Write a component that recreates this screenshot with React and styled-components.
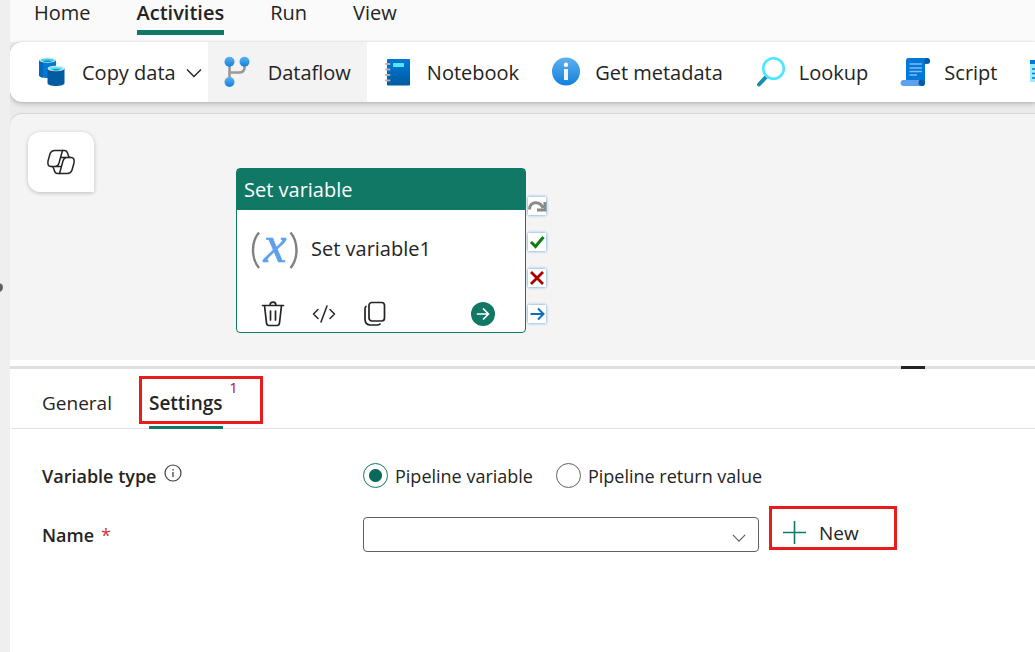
import React, { useState } from "react";
import styled, { createGlobalStyle, css } from "styled-components";

const GREEN = "#117865";

const GlobalStyle = createGlobalStyle`
  * { box-sizing: border-box; }
  body {
    margin: 0;
    background: #fff;
    color: #242424;
    font-family: "Open Sans", "Noto Sans", sans-serif;
    font-size: 20px;
    line-height: 28px;
    overflow: hidden;
  }
  button, select, input { font: inherit; color: inherit; margin: 0; }
  svg { display: block; flex: none; overflow: visible; }
`;

const Shell = styled.div`
  display: flex;
  min-height: 100vh;
`;

const Rail = styled.aside`
  position: relative;
  flex: none;
  width: 10px;
  background: #efefef;
`;

const RailDot = styled.span`
  position: absolute;
  top: 283px;
  left: -6px;
  width: 9px;
  height: 9px;
  border-radius: 50%;
  background: #616161;
`;

const Main = styled.main`
  flex: 1;
  min-width: 0;
  display: flex;
  flex-direction: column;
`;

const Plain = css`
  border: 0;
  padding: 0;
  background: none;
  cursor: pointer;
`;

const MenuTabs = styled.nav`
  display: flex;
  align-items: flex-start;
  gap: 46px;
  height: 42px;
  padding-left: 24px;
  background: #fafafa;
`;

const MenuTab = styled.button`
  ${Plain}
  height: 35px;
  padding-bottom: 4px;
  border-bottom: 5px solid ${(p) => (p.$active ? GREEN : "transparent")};
  font-weight: ${(p) => (p.$active ? 600 : 400)};
  line-height: 26px;
`;

const Ribbon = styled.div`
  background: #ebebeb;
  padding-bottom: 12px;
`;

const Toolbar = styled.div`
  display: flex;
  height: 60px;
  padding-left: 12px;
  border-radius: 12px 0 0 12px;
  background: #fff;
  box-shadow: 0 2px 5px rgba(0, 0, 0, 0.2), 0 0 2px rgba(0, 0, 0, 0.16);
  overflow: hidden;
`;

const ToolButton = styled.button`
  ${Plain}
  display: flex;
  flex: none;
  align-items: center;
  gap: 16px;
  padding: 0 16px;
  background: ${(p) => (p.$active ? "#f3f3f3" : "transparent")};
  white-space: nowrap;
`;

const CopyTool = styled(ToolButton)`
  padding-right: 6px;
`;

const ToolLabel = styled.span`
  display: flex;
  align-items: center;
  gap: 10px;
  padding-top: 2px;
`;

const Canvas = styled.section`
  position: relative;
  flex: none;
  height: 246px;
  border-radius: 12px 0 0 0;
  background: #f4f4f4;
  box-shadow: 0 -1px 1px rgba(0, 0, 0, 0.1);
`;

const CanvasBack = styled.div`
  background: #ebebeb;
`;

const CopilotButton = styled.button`
  ${Plain}
  position: absolute;
  top: 18px;
  left: 18px;
  display: grid;
  place-items: center;
  width: 66px;
  height: 60px;
  border-radius: 12px 12px 0 12px;
  background: #fff;
  box-shadow: 0 1px 4px rgba(0, 0, 0, 0.22);
`;

const Node = styled.article`
  position: absolute;
  top: 54px;
  left: 226px;
  display: flex;
  flex-direction: column;
  width: 290px;
  height: 165px;
  border: 1px solid ${GREEN};
  border-radius: 4px;
  background: #fff;
`;

const NodeTitle = styled.header`
  height: 41px;
  padding: 7px;
  background: ${GREEN};
  color: #fff;
`;

const NodeBody = styled.div`
  display: flex;
  align-items: center;
  gap: 12px;
  height: 78px;
  padding-left: 14px;
`;

const NodeActions = styled.div`
  display: flex;
  align-items: center;
  gap: 27px;
  height: 44px;
  padding: 8px 30px 0 24px;
`;

const IconButton = styled.button`
  ${Plain}
  margin-left: ${(p) => (p.$last ? "auto" : "0")};
`;

const Handles = styled.div`
  position: absolute;
  top: 83px;
  left: 518px;
  display: flex;
  flex-direction: column;
  gap: 18px;
`;

const Handle = styled.span`
  display: grid;
  place-items: center;
  width: 18px;
  height: 18px;
  background: #fff;
  box-shadow: 0 0 3px #4a9be0;
`;

const Splitter = styled.div`
  display: flex;
  justify-content: flex-end;
  margin-top: 6px;
  height: 3px;
  padding-right: 110px;
  background: #e0e0e0;
`;

const Grip = styled.span`
  width: 24px;
  background: #242424;
`;

const PanelTabs = styled.nav`
  display: flex;
  align-items: flex-end;
  gap: 37px;
  height: 60px;
  margin-left: 2px;
  padding-left: 30px;
  border-bottom: 1px solid #e0e0e0;
  font-size: 19px;
`;

const PanelTab = styled.button`
  ${Plain}
  position: relative;
  margin-bottom: -1px;
  padding-bottom: 9px;
  border-bottom: 3px solid ${(p) => (p.$active ? GREEN : "transparent")};
  font-weight: ${(p) => (p.$active ? 600 : 400)};
`;

const Callout = styled.span`
  position: absolute;
  top: -13px;
  left: -10px;
  width: 124px;
  height: 48px;
  padding-right: 22px;
  border: 3px solid #e91c1c;
  color: #c8006e;
  font-size: 15px;
  font-weight: 400;
  line-height: 16px;
  text-align: right;
  pointer-events: none;
`;

const Form = styled.form`
  display: grid;
  grid-template-columns: 321px 1fr;
  row-gap: 16px;
  padding: 25px 32px;
  font-size: 18px;
`;

const FieldLabel = styled.label`
  display: flex;
  align-items: center;
  gap: 7px;
  height: 43px;
  font-weight: 600;
`;

const Required = styled.span`
  color: #d13438;
  font-weight: 400;
`;

const Field = styled.div`
  display: flex;
  align-items: center;
  gap: 10px;
`;

const RadioLabel = styled.label`
  display: flex;
  align-items: center;
  gap: 7px;
  margin-right: 13px;
  white-space: nowrap;
`;

const Radio = styled.input`
  appearance: none;
  width: 25px;
  height: 25px;
  border: 1px solid #616161;
  border-radius: 50%;
  background: #fff;
  &:checked {
    border-color: ${GREEN};
    background: radial-gradient(circle, #0c695a 6px, #fff 7px);
  }
`;

const SelectWrap = styled.div`
  position: relative;
  flex: 0 1 396px;
`;

const Select = styled.select`
  display: block;
  appearance: none;
  width: 100%;
  height: 35px;
  border: 1px solid #616161;
  border-radius: 4px;
  background: #fff;
`;

const SelectArrow = styled.span`
  position: absolute;
  top: 16px;
  right: 13px;
  pointer-events: none;
`;

const NewButton = styled.button`
  ${Plain}
  display: flex;
  flex: none;
  align-items: center;
  gap: 13px;
  width: 128px;
  height: 44px;
  margin-top: -14px;
  padding: 10px 0 0 11px;
  border: 3px solid #e91c1c;
  font-size: 19px;
`;

const Chevron = ({ width = 16, color = "#242424" }) => (
  <svg width={width} height="10" viewBox="0 0 16 10" fill="none" stroke={color} strokeWidth="1.4">
    <path d="M1 1.5 8 8.5l7-7" />
  </svg>
);

const Icon = ({ children }) => (
  <svg width="28" height="32" viewBox="0 0 28 32" fill="none">
    <defs>
      <linearGradient id="sky" x1="0" y1="0" x2="0" y2="1">
        <stop offset="0" stopColor="#5eb0ef" />
        <stop offset="1" stopColor="#1380dc" />
      </linearGradient>
      <linearGradient id="azure" x1="0" y1="0" x2="0" y2="1">
        <stop offset="0" stopColor="#0078d7" />
        <stop offset="1" stopColor="#005ba1" />
      </linearGradient>
    </defs>
    {children}
  </svg>
);

const CopyIcon = () => (
  <Icon>
    <path d="M1 4v15c0 2 4 3 8.500 3s8.500-1 8.500-3V4z" fill="#0078d4" />
    <path d="M1 4v15c0 1.300 1.700 2.300 4 2.700V5z" fill="#0068bd" />
    <ellipse cx="9.500" cy="4" rx="8.500" ry="2.700" fill="#e8e8e8" />
    <ellipse cx="9.500" cy="4.200" rx="6.800" ry="1.800" fill="#32d4f5" />
    <path d="M5 5.300c2-1 7-1 9 0-2 .9-7 .9-9 0z" fill="#198ab3" />
    <path d="M9.500 12.500V27c0 2 4 3 8.500 3s8.500-1 8.500-3V12.500z" fill="#005ba1" />
    <ellipse cx="18" cy="12.500" rx="8.500" ry="2.800" fill="#e8e8e8" />
    <ellipse cx="18" cy="12.600" rx="6.800" ry="1.900" fill="#50e6ff" />
    <path d="M13.500 13.700c2-1 7-1 9 0-2 .9-7 .9-9 0z" fill="#198ab3" />
  </Icon>
);

const FlowIcon = () => (
  <Icon>
    <path d="M5.500 6v20M5.500 16.500h9.500c4 0 5.500-2 5.500-5V6" stroke="#999" strokeWidth="2.600" />
    <circle cx="5.500" cy="5.800" r="5" fill="url(#sky)" />
    <circle cx="20.500" cy="5.800" r="5" fill="url(#sky)" />
    <circle cx="5.500" cy="26" r="5" fill="url(#sky)" />
  </Icon>
);

const NotebookIcon = () => (
  <Icon>
    <rect x="4" y="3" width="23" height="26.500" rx="1" fill="url(#azure)" />
    <rect x="10" y="7" width="11" height="4" rx=".5" fill="#50e6ff" />
    <path d="M3 8h3.500M3 13.500h3.500M3 19h3.500M3 24.500h3.500" stroke="#b3b3b3" strokeWidth="2" strokeLinecap="round" />
  </Icon>
);

const InfoIcon = () => (
  <Icon>
    <circle cx="15" cy="15.500" r="14" fill="url(#sky)" />
    <circle cx="15" cy="8.800" r="2.200" fill="#fff" />
    <path d="M13 13h4v11h-4z" fill="#f2f2f2" />
  </Icon>
);

const LookupIcon = () => (
  <Icon>
    <path d="m4 28.500 8-8.500" stroke="#198ab3" strokeWidth="4" strokeLinecap="round" />
    <circle cx="18.500" cy="12.500" r="10.300" fill="#fff" stroke="#50e6ff" strokeWidth="2.600" />
  </Icon>
);

const ScriptIcon = () => (
  <Icon>
    <path d="M8 2h18c2.500 0 4 1 4 3.500S28 8 25 8V27c0 2-2 3-4 3l-2-5H6V5c0-2 1-3 2-3z" fill="#0078d7" />
    <path d="M24.500 4.500c0-1.500 1-2.500 2.500-2.500s3 1 3 3-2 2.500-5.500 2.500z" fill="#005ba1" />
    <path d="M3.500 24H20c-2 2-1 6 1.500 6h-18C-.5 30-.5 24 3.500 24z" fill="#5ea0ef" />
    <path d="M20 24c3-.5 5 0 5 3s-2 3-3.500 3-3-1-3-3 1-3 1.500-3z" fill="#005ba1" />
    <path d="M9.500 8H22M9.500 12H22M9.500 15.500H22M9.500 19H17" stroke="#83b9f9" strokeWidth="1.400" />
  </Icon>
);

const ListIcon = () => (
  <Icon>
    <path d="M1 4h26v22H1z" fill="#9cebff" />
    <path d="M1 4h26v4H1z" fill="#0078d4" />
    <path d="M3 13h20M3 17.500h20M3 22h20" stroke="#0078d4" strokeWidth="1.500" />
  </Icon>
);

const CopilotIcon = () => (
  <svg width="28" height="26" viewBox="0 0 28 26" fill="none" stroke="#242424" strokeWidth="1.500" strokeLinejoin="round">
    <path d="M8 1.500h7.500L12 14c-.7 2.300-1.600 3.500-3.500 3.500H4C1 17.500.5 15 1 12l2-7C3.700 2.700 5 1.500 8 1.500z" />
    <path d="M20 24.500h-7.500L16 12c.7-2.300 1.600-3.500 3.500-3.500H24c3 0 3.500 2.500 3 5.500l-2 7c-.7 2.300-2 3.500-5 3.500z" />
    <path d="M15 1.500h2.500c2 0 2.500 1 3 2.500l1 3c.3 1 .8 1.500 1.800 1.500M13.500 8.500h6M13 24.500h-2.500c-2 0-2.500-1-3-2.500l-1-3c-.3-1-.8-1.500-1.800-1.500M14.500 17.500h-6" />
  </svg>
);

const VariableIcon = () => (
  <svg width="48" height="72" viewBox="0 -18 48 72" fontFamily="Liberation Serif, serif">
    <g fill="none" stroke="#808080" strokeWidth="2.400">
      <path d="M8 1.500C0 11 0 27.500 8 37" />
      <path d="M39.500 1.500c8 9.500 8 26 0 35.500" />
    </g>
    <text x="24" y="31" textAnchor="middle" fontSize="52" fontStyle="italic" fill="#5ea0ef" stroke="#5ea0ef" strokeWidth=".6">x</text>
  </svg>
);

const TrashIcon = () => (
  <svg width="24" height="26" viewBox="0 0 24 26" fill="none" stroke="#242424" strokeWidth="1.700" strokeLinecap="round">
    <path d="M1.500 4.500h21M3.500 4.500l2 17.500c.2 1.700 1 2.500 2.500 2.500h8c1.500 0 2.300-.8 2.500-2.500l2-17.500M9 4.500c0-4.500 6-4.500 6 0M9.500 10v9M14.500 10v9" />
  </svg>
);

const CodeIcon = () => (
  <svg width="24" height="20" viewBox="0 0 24 20" fill="none" stroke="#242424" strokeWidth="1.500" strokeLinecap="round" strokeLinejoin="round">
    <path d="M6 5.500 1.500 10 6 14.500M18 5.500l4.500 4.500-4.500 4.500M15 2 9 18" />
  </svg>
);

const DuplicateIcon = () => (
  <svg width="24" height="26" viewBox="0 0 24 26" fill="none" stroke="#242424" strokeWidth="1.700" strokeLinecap="round">
    <rect x="6" y="1.500" width="15.500" height="18.500" rx="3" />
    <path d="M3 5.500C2 6 2 7 2 8v10c0 4 2 6 5.500 6H14c1.500 0 2.500-.5 3-1" />
  </svg>
);

const GoIcon = () => (
  <svg width="24" height="24" viewBox="0 0 24 24" fill="none" stroke="#fff" strokeWidth="1.700" strokeLinecap="round" strokeLinejoin="round">
    <circle cx="12" cy="12" r="12" fill={GREEN} stroke="none" />
    <path d="M6.500 12h11M12.500 7l5 5-5 5" />
  </svg>
);

const HANDLES = [
  { name: "skip", color: "#8a8a8a", width: 3, d: "M1.500 12.500C1.500 4 12 3.500 15 11M17 5v8H9" },
  { name: "success", color: "#107c10", width: 3, d: "m3 9 4.500 4.500L15.500 4" },
  { name: "fail", color: "#a80000", width: 2.8, d: "m3 3 12 12M15 3 3 15" },
  { name: "completion", color: "#0f6cbd", width: 2, d: "M2.500 9h13M10 3.500 15.500 9 10 14.500" },
];

const TOOLS = [
  { label: "Copy data", icon: <CopyIcon />, menu: true },
  { label: "Dataflow", icon: <FlowIcon />, active: true },
  { label: "Notebook", icon: <NotebookIcon /> },
  { label: "Get metadata", icon: <InfoIcon /> },
  { label: "Lookup", icon: <LookupIcon /> },
  { label: "Script", icon: <ScriptIcon /> },
];

export default function App() {
  const [kind, setKind] = useState("variable");
  return (
    <Shell>
      <GlobalStyle />
      <Rail>
        <RailDot />
      </Rail>
      <Main>
        <MenuTabs>
          {["Home", "Activities", "Run", "View"].map((t) => (
            <MenuTab key={t} type="button" $active={t === "Activities"}>{t}</MenuTab>
          ))}
        </MenuTabs>
        <Ribbon>
          <Toolbar>
            {TOOLS.map(({ label, icon, active, menu }) => {
              const Tool = menu ? CopyTool : ToolButton;
              return (
                <Tool key={label} type="button" $active={active}>
                  {icon}
                  <ToolLabel>
                    {label}
                    {menu && <Chevron />}
                  </ToolLabel>
                </Tool>
              );
            })}
            <ToolButton type="button" aria-label="More activities">
              <ListIcon />
            </ToolButton>
          </Toolbar>
        </Ribbon>
        <CanvasBack>
          <Canvas>
            <CopilotButton type="button" aria-label="Copilot">
              <CopilotIcon />
            </CopilotButton>
            <Node>
              <NodeTitle>Set variable</NodeTitle>
              <NodeBody>
                <VariableIcon />
                <span>Set variable1</span>
              </NodeBody>
              <NodeActions>
                <IconButton type="button" aria-label="Delete"><TrashIcon /></IconButton>
                <IconButton type="button" aria-label="View code"><CodeIcon /></IconButton>
                <IconButton type="button" aria-label="Duplicate"><DuplicateIcon /></IconButton>
                <IconButton type="button" aria-label="Add output" $last><GoIcon /></IconButton>
              </NodeActions>
            </Node>
            <Handles>
              {HANDLES.map((h) => (
                <Handle key={h.name}>
                  <svg width="18" height="18" viewBox="0 0 18 18" fill="none" stroke={h.color} strokeWidth={h.width}>
                    <path d={h.d} />
                  </svg>
                </Handle>
              ))}
            </Handles>
          </Canvas>
        </CanvasBack>
        <Splitter>
          <Grip />
        </Splitter>
        <PanelTabs>
          <PanelTab type="button">General</PanelTab>
          <PanelTab type="button" $active>
            Settings
            <Callout>1</Callout>
          </PanelTab>
        </PanelTabs>
        <Form>
          <FieldLabel as="div" id="variable-type">
            Variable type
            <svg width="18" height="24" viewBox="0 0 18 24" fill="none" stroke="#424242">
              <circle cx="9" cy="9" r="8" strokeWidth="1.200" />
              <path d="M9 8v5M9 5v1.500" strokeWidth="1.300" />
            </svg>
          </FieldLabel>
          <Field role="radiogroup" aria-labelledby="variable-type">
            <RadioLabel>
              <Radio type="radio" name="kind" checked={kind === "variable"} onChange={() => setKind("variable")} />
              Pipeline variable
            </RadioLabel>
            <RadioLabel>
              <Radio type="radio" name="kind" checked={kind === "return"} onChange={() => setKind("return")} />
              Pipeline return value
            </RadioLabel>
          </Field>
          <FieldLabel htmlFor="variable-name">
            Name <Required>*</Required>
          </FieldLabel>
          <Field>
            <SelectWrap>
              <Select id="variable-name" defaultValue="">
                <option value="" />
              </Select>
              <SelectArrow>
                <Chevron width={14} color="#616161" />
              </SelectArrow>
            </SelectWrap>
            <NewButton type="button">
              <svg width="23" height="23" viewBox="0 0 23 23" stroke={GREEN} strokeWidth="1.600">
                <path d="M11.500 0v23M0 11.500h23" />
              </svg>
              New
            </NewButton>
          </Field>
        </Form>
      </Main>
    </Shell>
  );
}
